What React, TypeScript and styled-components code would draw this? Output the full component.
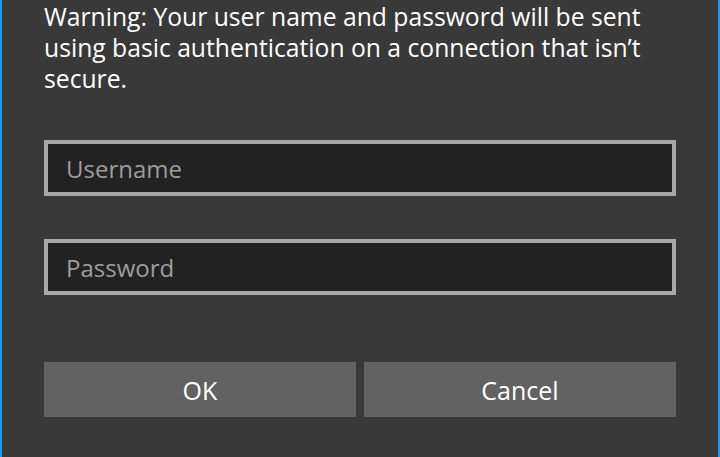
import React from "react";
import styled, { createGlobalStyle } from "styled-components";

const Global = createGlobalStyle`
  html, body { margin: 0; padding: 0; background: #393939; }
  body { font-family: "Open Sans", "Noto Sans", sans-serif; }
`;

const Dialog = styled.div`
  box-sizing: border-box;
  width: 720px;
  height: 457px;
  background: #393939;
  border-left: 2px solid #1a9bf0;
  border-right: 2px solid #1a9bf0;
  padding: 1px 42px 0 42px;
  display: flex;
  flex-direction: column;
`;

const Message = styled.p`
  margin: 0;
  color: #ffffff;
  font-size: 24.7px;
  line-height: 31px;
`;

const Field = styled.input`
  box-sizing: border-box;
  width: 100%;
  height: 56px;
  margin: 0;
  border: 4px solid #a8a8a8;
  background: #222222;
  color: #ffffff;
  font-family: "Open Sans", "Noto Sans", sans-serif;
  font-size: 24px;
  padding: 0 0 0 18px;
  outline: none;
  &::placeholder { color: #9d9d9d; }
`;

const Fields = styled.div`
  display: flex;
  flex-direction: column;
  gap: 43px;
  margin-top: 46px;
`;

const Buttons = styled.div`
  display: grid;
  grid-template-columns: 1fr 1fr;
  gap: 8px;
  margin-top: 67px;
`;

const Button = styled.button`
  height: 55px;
  border: none;
  background: #626262;
  color: #ffffff;
  font-family: "Open Sans", "Noto Sans", sans-serif;
  font-size: 25px;
  padding: 0;
`;

export default function App() {
  return (
    <>
      <Global />
      <Dialog>
        <Message>
          Warning: Your user name and password will be sent using basic authentication on a connection that isn’t secure.
        </Message>
        <Fields>
          <Field placeholder="Username" />
          <Field type="password" placeholder="Password" />
        </Fields>
        <Buttons>
          <Button>OK</Button>
          <Button>Cancel</Button>
        </Buttons>
      </Dialog>
    </>
  );
}
